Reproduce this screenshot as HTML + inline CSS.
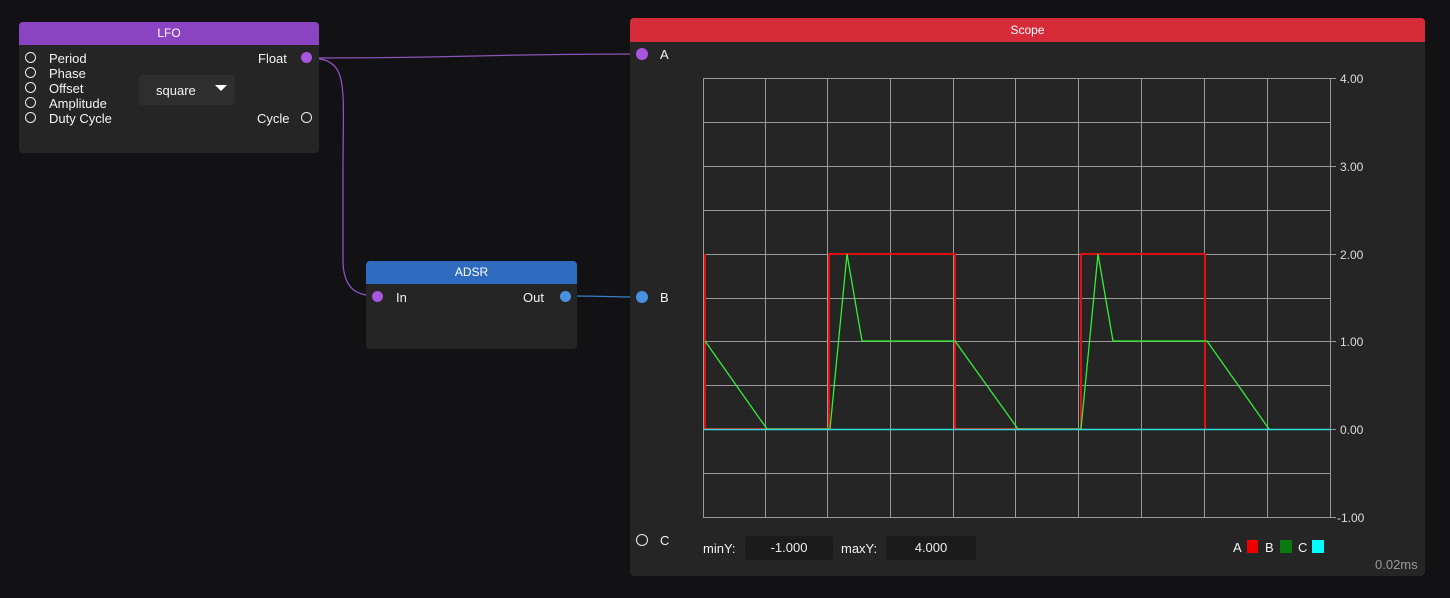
<!DOCTYPE html>
<html><head><style>
body{margin:0;width:1450px;height:598px;background:#121214;position:relative;overflow:hidden;font-family:"Liberation Sans",sans-serif;color:#eee;font-size:13px}
.node{position:absolute;background:#252526;border-radius:4px;overflow:hidden}
.hd{height:23px;line-height:23px;text-align:center;font-size:12px;color:#fff}
.t{position:absolute;font-size:13px;color:#f4f4f4;line-height:15px}
.pin{position:absolute;width:11px;height:11px;border:1.5px solid #eee;border-radius:50%;box-sizing:border-box}
.fill{border:none}
.box{position:absolute;background:#1b1b1c;border-radius:2px;text-align:center;line-height:24px;height:24px}
</style></head><body>
<svg width="1450" height="598" style="position:absolute;left:0;top:0">
<path d="M307 58 C480 58,470 54,642 54" stroke="#8a55b8" stroke-width="1.2" fill="none"/>
<path d="M307 58 C350 58,343 80,343 170 L343 260 C343 292,360 296,378 296" stroke="#9a52d0" stroke-width="1.2" fill="none"/>
<path d="M565 296 C600 296,610 297,642 297" stroke="#3a7ccc" stroke-width="1.2" fill="none"/>
</svg>
<div class="node" style="left:19px;top:22px;width:300px;height:131px">
<div class="hd" style="background:#8a44c2">LFO</div>
<div class="pin" style="left:6px;top:30px"></div><div class="t" style="left:30px;top:29px">Period</div>
<div class="pin" style="left:6px;top:45px"></div><div class="t" style="left:30px;top:44px">Phase</div>
<div class="pin" style="left:6px;top:60px"></div><div class="t" style="left:30px;top:59px">Offset</div>
<div class="pin" style="left:6px;top:75px"></div><div class="t" style="left:30px;top:74px">Amplitude</div>
<div class="pin" style="left:6px;top:90px"></div><div class="t" style="left:30px;top:89px">Duty Cycle</div>
<div class="t" style="left:239px;top:29px">Float</div><div class="pin fill" style="left:282px;top:30px;background:#a855e0"></div>
<div class="t" style="left:238px;top:89px">Cycle</div><div class="pin" style="left:282px;top:90px"></div>
<div style="position:absolute;left:120px;top:53px;width:96px;height:30px;background:#2e2e2f;border-radius:3px"><span class="t" style="left:17px;top:8px">square</span><span style="position:absolute;left:76px;top:10px;border-left:6px solid transparent;border-right:6px solid transparent;border-top:6px solid #fff"></span></div>
</div>
<div class="node" style="left:366px;top:261px;width:211px;height:88px">
<div class="hd" style="background:#2e6bbf">ADSR</div>
<div class="pin fill" style="left:6px;top:30px;background:#a855e0"></div><div class="t" style="left:30px;top:29px">In</div>
<div class="t" style="left:157px;top:29px">Out</div><div class="pin fill" style="left:194px;top:30px;background:#4a90e0"></div>
</div>
<div class="node" style="left:630px;top:18px;width:795px;height:558px">
<div class="hd" style="background:#d62c3a;height:24px;line-height:24px">Scope</div>
<div class="pin fill" style="left:6px;top:30px;width:12px;height:12px;background:#a855e0"></div><div class="t" style="left:30px;top:29px">A</div>
<div class="pin fill" style="left:6px;top:273px;width:12px;height:12px;background:#4a90e0"></div><div class="t" style="left:30px;top:272px">B</div>
<div class="pin" style="left:6px;top:516px;width:12px;height:12px"></div><div class="t" style="left:30px;top:515px">C</div>
<div class="t" style="left:73px;top:523px">minY:</div><div class="box" style="left:115px;top:518px;width:88px">-1.000</div>
<div class="t" style="left:211px;top:523px">maxY:</div><div class="box" style="left:256px;top:518px;width:90px">4.000</div>
<div class="t" style="left:603px;top:522px">A</div><div style="position:absolute;left:617px;top:522px;width:11px;height:13px;background:#e00"></div>
<div class="t" style="left:635px;top:522px">B</div><div style="position:absolute;left:650px;top:522px;width:12px;height:13px;background:#0a7a10"></div>
<div class="t" style="left:668px;top:522px">C</div><div style="position:absolute;left:682px;top:522px;width:12px;height:13px;background:#0ff"></div>
<div class="t" style="left:745px;top:539px;color:#999">0.02ms</div>
</div>
<svg width="1450" height="598" style="position:absolute;left:0;top:0">
<g stroke="#9a9a9a" stroke-width="1">
<path d="M703.5 78V517M765.5 78V517M827.5 78V517M890.5 78V517M953.5 78V517M1015.5 78V517M1078.5 78V517M1141.5 78V517M1204.5 78V517M1267.5 78V517M1330.5 78V517"/>
<path d="M703 78.5H1330M703 122.5H1330M703 166.5H1330M703 210.5H1330M703 254.5H1330M703 298.5H1330M703 341.5H1330M703 385.5H1330M703 429.5H1330M703 473.5H1330M703 517.5H1330"/>
<path d="M1330 78.5H1336M1330 166.5H1336M1330 254.5H1336M1330 341.5H1336M1330 429.5H1336M1330 517.5H1336"/>
</g>
<g font-size="12" fill="#ddd" font-family="Liberation Sans"><text x="1340" y="83">4.00</text><text x="1340" y="171">3.00</text><text x="1340" y="259">2.00</text><text x="1340" y="346">1.00</text><text x="1340" y="434">0.00</text><text x="1337" y="522">-1.00</text></g>
<path d="M705 429V254M705 429H829V254H955V429H1081V254H1205V429" stroke="#e01010" stroke-width="2" fill="none"/>
<path d="M705 341L767 429H830L847 254L862 341H955L1018 429H1081L1098 254L1113 341H1207L1269 429" stroke="#33ee33" stroke-width="1.3" fill="none"/>
<path d="M703 429.5H1330" stroke="#3dd" stroke-width="1.5"/>
</svg>
</body></html>
